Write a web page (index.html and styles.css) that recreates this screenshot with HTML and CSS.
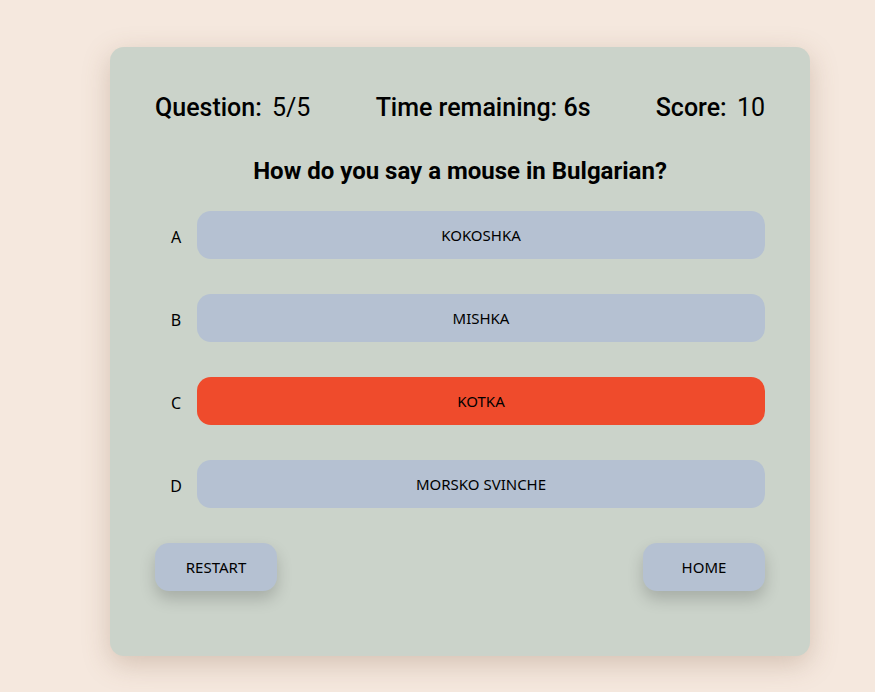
FILE: index.html
```html
<!DOCTYPE html>
<html>
<head>
<meta charset="utf-8">
<link rel="stylesheet" href="styles.css">
</head>
<body>
<main class="card">
  <div class="stats">
    <div class="stat"><span class="label">Question:</span> <span class="value">5/5</span></div>
    <div class="stat"><span class="label">Time remaining: 6s</span></div>
    <div class="stat"><span class="label">Score:</span> <span class="value">10</span></div>
  </div>
  <h1 class="question">How do you say a mouse in Bulgarian?</h1>
  <div class="answers">
    <div class="answer"><span class="letter">A</span><button class="opt">KOKOSHKA</button></div>
    <div class="answer"><span class="letter">B</span><button class="opt">MISHKA</button></div>
    <div class="answer"><span class="letter">C</span><button class="opt wrong">KOTKA</button></div>
    <div class="answer"><span class="letter">D</span><button class="opt">MORSKO SVINCHE</button></div>
  </div>
  <div class="actions">
    <button class="action">RESTART</button>
    <button class="action">HOME</button>
  </div>
</main>
</body>
</html>
```
FILE: styles.css
```css
html, body {
  margin: 0;
  padding: 0;
}
body {
  background: #f5e8de;
  font-family: Roboto, "Liberation Sans", sans-serif;
  color: #000;
  width: 875px;
  height: 692px;
  padding-top: 47px;
  box-sizing: border-box;
}
.card {
  margin-left: 110px;
  width: 700px;
  height: 609px;
  box-sizing: border-box;
  background: #cbd3ca;
  border-radius: 14px;
  box-shadow: 0 8px 28px rgba(130, 95, 70, 0.28);
  padding: 46px 45px 0 45px;
  display: flex;
  flex-direction: column;
}
.stats {
  display: flex;
  justify-content: space-between;
  font-size: 25px;
  line-height: 30px;
}
.stat .label { font-weight: 500; }
.stat .value { font-weight: 400; margin-left: 4px; }
.question {
  margin: 33px 0 0 0;
  text-align: center;
  font-size: 24px;
  font-weight: 700;
  line-height: 30px;
}
.answers {
  margin-top: 25px;
  display: flex;
  flex-direction: column;
  gap: 35px;
}
.answer {
  display: flex;
  align-items: center;
}
.letter {
  width: 42px;
  text-align: center;
  font-family: "Noto Sans", sans-serif;
  font-size: 16px;
  padding-top: 4px;
}
.opt {
  flex: 1;
  height: 48px;
  border: none;
  border-radius: 14px;
  background: #b5c1d2;
  font-family: "Noto Sans", sans-serif;
  font-size: 15px;
  color: #000;
}
.opt.wrong { background: #ef4b2c; }
.actions {
  margin-top: 35px;
  display: flex;
  justify-content: space-between;
}
.action {
  width: 122px;
  height: 48px;
  border: none;
  border-radius: 14px;
  background: #b5c1d2;
  font-family: "Noto Sans", sans-serif;
  font-size: 15px;
  color: #000;
  box-shadow: 0 8px 16px rgba(0, 0, 0, 0.18);
}
```
